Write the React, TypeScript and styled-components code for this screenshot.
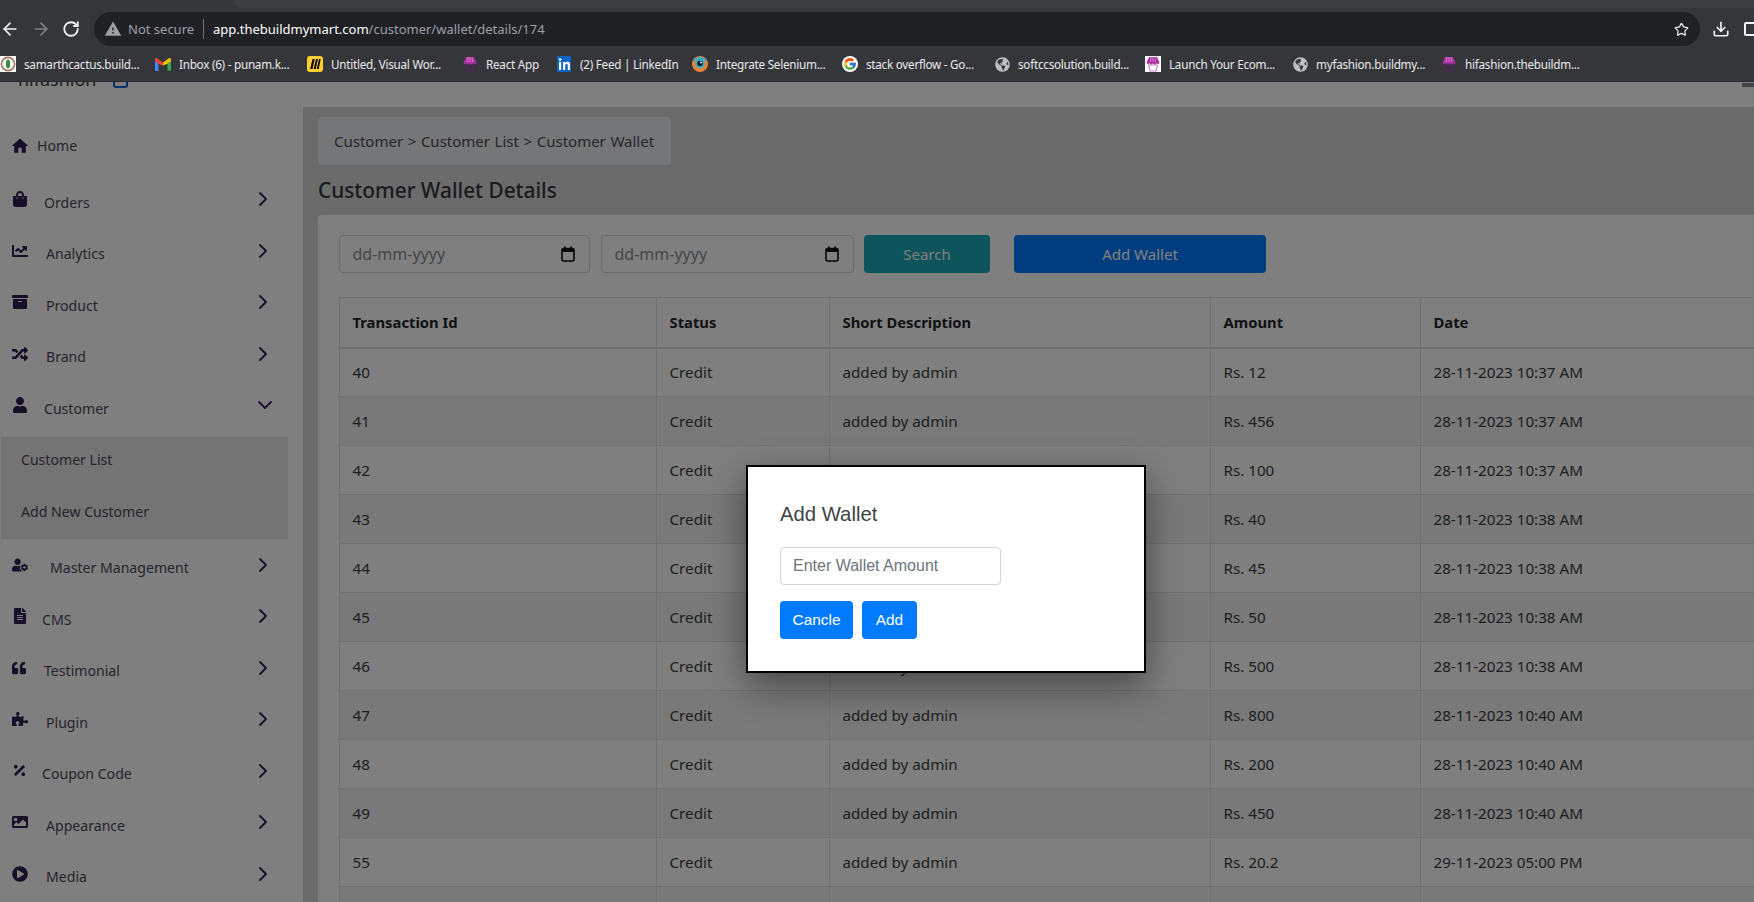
import React from "react";
import styled, { createGlobalStyle } from "styled-components";
import { ArrowLeft, ArrowRight, RotateCw, Star, ChevronRight, ChevronDown, Download } from "lucide-react";
import { MdWarning, MdHome } from "react-icons/md";
import { FcGoogle } from "react-icons/fc";
import {
  FaShoppingBag, FaChartLine, FaArchive, FaRandom, FaUser, FaUserCog, FaFileAlt,
  FaQuoteLeft, FaPuzzlePiece, FaPercentage, FaImage, FaPlayCircle, FaGlobeAmericas,
} from "react-icons/fa";

const Global = createGlobalStyle`
  html, body { margin: 0; padding: 0; background: #fff; overflow: hidden; }
  * { box-sizing: border-box; }
`;

const UI = `"Noto Sans", "Open Sans", sans-serif`;

const Shell = styled.div`
  width: 1754px; height: 902px; overflow: hidden;
  display: flex; flex-direction: column;
  font-family: ${UI};
`;

/* browser chrome */
const TabStrip = styled.div`
  height: 8px; background: #35363a; padding-left: 234px; flex: none;
`;
const TabBand = styled.div`
  height: 8px; background: #3d3f43; border-bottom-left-radius: 8px;
`;
const Toolbar = styled.div`
  height: 38px; flex: none; background: #35363a;
  display: flex; align-items: flex-start; padding-top: 4px;
`;
const NavIcons = styled.div`
  width: 94px; height: 34px; flex: none;
  display: flex; align-items: center; gap: 11px; color: #f1f3f4;
`;
const NavButton = styled.span<{ $muted?: boolean }>`
  display: inline-flex; color: ${(p) => (p.$muted ? "#7d8084" : "#f1f3f4")};
`;
const Omnibox = styled.div`
  width: 1606px; height: 34px; flex: none; border-radius: 17px; background: #202124;
  display: flex; align-items: center; padding: 0 11px 0 10px;
  font-size: 13px; white-space: nowrap;
`;
const InsecureText = styled.span`
  color: #9aa0a6; margin-left: 6px; width: 68px;
`;
const Divider = styled.span`
  width: 1px; height: 20px; background: #6f7378; margin: 0 9px 0 7px;
`;
const UrlHost = styled.span` color: #fff; `;
const UrlPath = styled.span` color: #9aa0a6; flex: 1; `;
const ToolRight = styled.div`
  flex: 1; height: 34px; display: flex; align-items: center; gap: 14px; padding-left: 12px; color: #f1f3f4;
`;
const CutBox = styled.span`
  width: 12px; height: 14px; border: 2px solid #f1f3f4; border-radius: 2px; flex: none;
`;
const Bookmarks = styled.div`
  height: 36px; flex: none; background: #35363a; border-bottom: 1px solid #2b2c2f;
  display: flex; align-items: center; padding-top: 1px;
`;
const Bookmark = styled.div<{ $w: number; $x: number }>`
  width: ${(p) => p.$w}px; margin-left: ${(p) => p.$x}px; flex: none;
  display: flex; align-items: center; gap: 8px;
`;
const BookmarkLabel = styled.span`
  color: #e8eaed; font-size: 11.7px; letter-spacing: -0.25px; white-space: nowrap; line-height: 16px;
`;
const Favicon = styled.span`
  width: 16px; height: 16px; flex: none; display: inline-flex; align-items: center; justify-content: center;
`;
const GoogleDisc = styled(Favicon)`
  background: #fff; border-radius: 50%;
`;
const GlobeIcon = styled(FaGlobeAmericas)`
  color: #bdc1c6;
`;

/* page under the dialog */
const PageArea = styled.div`
  flex: 1; position: relative; overflow: hidden; background: #d7d7d7;
  display: flex; flex-direction: column;
`;
const TopBar = styled.div`
  height: 25px; flex: none; background: #fff; overflow: hidden;
  display: flex; justify-content: space-between; padding: 0 0 0 18px;
`;
const Brand = styled.div`
  display: flex; align-items: center; height: 24px; margin-top: -15px; gap: 17px;
  font-size: 18px; color: #3a3a3a; line-height: 24px;
`;
const BrandMark = styled.span`
  width: 15px; height: 18px; border: 2px solid #0b5ed7; border-radius: 3px;
`;
const TopDash = styled.span`
  width: 12px; height: 4px; background: #8a8a8a; margin-top: 1px;
`;
const Body = styled.div`
  flex: 1; display: flex; min-height: 0;
`;
const Sidebar = styled.nav`
  width: 303px; flex: none; background: #fff; padding-top: 11px;
`;
const NavRow = styled.div<{ $h?: number }>`
  height: ${(p) => p.$h ?? 51.5}px; display: flex; align-items: center; padding-left: 12px;
  color: #2f1c4f;
`;
const NavIcon = styled.span<{ $nudge?: number }>`
  width: 20px; flex: none; display: inline-flex; align-items: center; margin-left: ${(p) => p.$nudge ?? 0}px;
  margin-right: ${(p) => -(p.$nudge ?? 0)}px;
`;
const NavLabel = styled.span<{ $x: number; $home?: boolean }>`
  margin-left: ${(p) => p.$x - 32}px; margin-top: ${(p) => (p.$home ? 0 : 6)}px;
  font-size: 14.1px; color: #4c4a58; white-space: nowrap;
`;
const NavChevron = styled.span<{ $open?: boolean }>`
  margin-left: auto; width: 24px; height: 24px; margin-right: ${(p) => (p.$open ? 26 : 28)}px;
  display: inline-flex; color: #2f1c4f;
`;
const SubMenu = styled.div`
  margin: 5.5px 15px 0 1px; height: 102.5px; background: #e8e8e8;
`;
const SubItem = styled.div`
  height: 51.5px; padding: 0 0 5px 20px; display: flex; align-items: center;
  font-size: 14.1px; color: #4c4a58;
`;

const Main = styled.main`
  flex: 1; padding: 10px 0 0 15px; min-width: 0; overflow: hidden;
`;
const Crumbs = styled.div`
  width: 353px; height: 48px; background: #e9ecef; border-radius: 4px;
  display: flex; align-items: center; padding-left: 16px;
  font-size: 15px; word-spacing: 0.7px; color: #4c4f54; white-space: nowrap;
`;
const PageTitle = styled.h1`
  margin: 0 0 1px; height: 49px; display: flex; align-items: center;
  font-size: 20.8px; font-weight: 500; color: #33363a; white-space: nowrap;
`;
const Card = styled.section`
  width: 1500px; background: #fff; border-radius: 4px; padding: 20px 21px;
`;
const Filters = styled.div`
  display: flex; align-items: stretch; height: 38px; margin-bottom: 24px;
`;
const DateField = styled.div<{ $w: number; $mr: number }>`
  width: ${(p) => p.$w}px; margin-right: ${(p) => p.$mr}px; flex: none;
  border: 1px solid #ced4da; border-radius: 4px;
  display: flex; align-items: center; justify-content: space-between; padding: 0 14px 1px 12.5px;
  font-size: 16px; color: #8a8f94;
`;
const ActionButton = styled.button<{ $w: number; $mr?: number; $bg: string }>`
  width: ${(p) => p.$w}px; margin-right: ${(p) => p.$mr ?? 0}px; flex: none;
  background: ${(p) => p.$bg}; color: #fff; border: 0; border-radius: 4px;
  font-family: ${UI}; font-size: 15px;
`;
const Table = styled.table`
  width: 100%; table-layout: fixed; border-collapse: collapse; color: #3a3d40; font-size: 15.2px;
`;
const Th = styled.th<{ $w?: number }>`
  width: ${(p) => (p.$w ? `${p.$w}px` : "auto")};
  height: 50px; padding: 0 12.5px; text-align: left; font-weight: 700; color: #212529; font-size: 14.8px;
  border: 1px solid #dee2e6; border-bottom-width: 2px;
`;
const Td = styled.td`
  height: 49px; padding: 0 12.5px; border: 1px solid #dee2e6;
`;
const Tr = styled.tr`
  &:nth-child(even) { background: rgba(0, 0, 0, 0.05); }
`;

/* dialog */
const Backdrop = styled.div`
  position: absolute; inset: 0; background: rgba(0, 0, 0, 0.5);
`;
const Dialog = styled.div`
  position: absolute; left: 746px; top: 383px; width: 400px; height: 208px;
  background: #fff; border: 2px solid #000; padding: 32px;
  box-shadow: 0 12px 34px rgba(0, 0, 0, 0.45);
  font-family: "Liberation Sans", Arial, sans-serif;
`;
const DialogTitle = styled.div`
  font-size: 20.3px; line-height: 30px; color: #3d4246; margin-bottom: 18px;
`;
const AmountInput = styled.input`
  display: block; width: 221px; height: 38px; padding: 0 12px;
  border: 1px solid #ced4da; border-radius: 4px; font: 16px "Liberation Sans", Arial, sans-serif;
  margin-bottom: 16px; outline: none;
  &::placeholder { color: #6c757d; opacity: 1; }
`;
const DialogActions = styled.div`
  display: flex; gap: 9px;
`;
const DialogButton = styled.button<{ $w: number }>`
  width: ${(p) => p.$w}px; height: 38px; background: #007bff; color: #fff; border: 0; border-radius: 4px;
  font: 15.4px "Liberation Sans", Arial, sans-serif; padding: 0;
`;

const Calendar = () => (
  <svg width="14" height="16" viewBox="0 0 14 16">
    <rect x="1" y="2.5" width="12" height="12.5" rx="1.5" fill="none" stroke="#111" strokeWidth="1.6" />
    <rect x="1" y="2.5" width="12" height="3.5" fill="#111" />
    <rect x="3" y="0.5" width="1.6" height="3" fill="#111" />
    <rect x="9.4" y="0.5" width="1.6" height="3" fill="#111" />
  </svg>
);

const Store = ({ bg }: { bg?: string }) => (
  <svg width="16" height="16" viewBox="0 0 16 16">
    {bg && <rect width="16" height="16" fill={bg} />}
    <path d="M4 1h8l2.500 5.500a1.600 1.600 0 0 1-3 .6 1.700 1.700 0 0 1-3.500 0 1.700 1.700 0 0 1-3.500 0 1.600 1.600 0 0 1-3-.6z" fill="#a8329f" />
    <path d="M3.500 9h9l-1.500 6H5z" fill="none" stroke={bg ? "#c98ac6" : "#5b2160"} strokeWidth="1.200" />
    <path d="M6 1 5.400 6M10 1l.6 5M8 1v5" stroke="#e59ae0" strokeWidth=".7" />
  </svg>
);
const Cactus = () => (
  <svg width="16" height="16" viewBox="0 0 16 16">
    <rect width="16" height="16" fill="#fff" />
    <circle cx="8" cy="8" r="6.600" fill="none" stroke="#a5765f" strokeWidth="1.600" />
    <ellipse cx="8" cy="8" rx="2" ry="4.400" fill="#2f8a3b" />
  </svg>
);
const Gmail = () => (
  <svg width="16" height="13" viewBox="0 0 16 13">
    <path d="M0 2v9.500A1.200 1.200 0 0 0 1.200 13H3.500V5.800z" fill="#4285f4" />
    <path d="M16 2v9.500a1.200 1.200 0 0 1-1.200 1.200h-2.300V5.800z" fill="#34a853" />
    <path d="M3.500 5.800 0 3V1.600C0 .4 1.400-.3 2.400.4L8 4.600v3z" fill="#ea4335" />
    <path d="M12.500 5.800 16 3V1.600c0-1.200-1.400-1.900-2.400-1.200L8 4.600v3z" fill="#fbbc04" />
  </svg>
);
const Miro = () => (
  <svg width="16" height="16" viewBox="0 0 16 16">
    <rect width="16" height="16" rx="3" fill="#ffd02f" />
    <path d="M3 13 5.500 3h2.300L5.500 13zM6.500 13 9 3h2L8.800 13zM9.700 13 12 3h1.700L11.800 13z" fill="#141414" />
  </svg>
);
const LinkedIn = () => (
  <svg width="14" height="16" viewBox="0 0 14 16">
    <rect width="14" height="16" fill="#0a66c2" />
    <rect x="2" y="6" width="2.200" height="8" fill="#fff" />
    <circle cx="3.100" cy="3.600" r="1.300" fill="#fff" />
    <path d="M6 6h2v1.200c.5-.9 1.400-1.400 2.400-1.400 1.900 0 2.600 1.200 2.600 3.200v5h-2.200V9.600c0-1-.3-1.700-1.200-1.700S8.200 8.600 8.200 9.600V14H6z" fill="#fff" />
  </svg>
);
const LensLogo = () => (
  <svg width="16" height="16" viewBox="0 0 16 16">
    <circle cx="8" cy="8" r="8" fill="#e8833a" />
    <path d="M1 5a8 8 0 0 1 14 0z" fill="#4aa5b5" />
    <circle cx="8" cy="7.500" r="4.800" fill="#3fb0c0" />
    <circle cx="8" cy="7.500" r="2.800" fill="#15202b" />
    <circle cx="9" cy="6.500" r=".9" fill="#fff" />
  </svg>
);

const bookmarks: { x: number; w: number; t: string; icon: React.ReactNode }[] = [
  { x: 0, w: 138, t: "samarthcactus.build...", icon: <Cactus /> },
  { x: 17, w: 136, t: "Inbox (6) - punam.k...", icon: <Gmail /> },
  { x: 16, w: 138, t: "Untitled, Visual Wor...", icon: <Miro /> },
  { x: 17, w: 77, t: "React App", icon: <Store /> },
  { x: 17, w: 119, t: "(2) Feed | LinkedIn", icon: <LinkedIn /> },
  { x: 17, w: 133, t: "Integrate Selenium...", icon: <LensLogo /> },
  { x: 17, w: 135, t: "stack overflow - Go...", icon: <GoogleDisc><FcGoogle size={14} /></GoogleDisc> },
  { x: 17, w: 135, t: "softccsolution.build...", icon: <GlobeIcon size={15} /> },
  { x: 16, w: 129, t: "Launch Your Ecom...", icon: <Store bg="#fff" /> },
  { x: 18, w: 132, t: "myfashion.buildmy...", icon: <GlobeIcon size={15} /> },
  { x: 17, w: 137, t: "hifashion.thebuildm...", icon: <Store /> },
];

const Nav = ({ icon, label, x, open }: { icon: React.ReactNode; label: string; x: number; open?: boolean }) => (
  <NavRow>
    <NavIcon>{icon}</NavIcon>
    <NavLabel $x={x}>{label}</NavLabel>
    <NavChevron $open={open}>{open ? <ChevronDown size={24} strokeWidth={1.8} /> : <ChevronRight size={24} strokeWidth={1.8} />}</NavChevron>
  </NavRow>
);

const rows: [string, string, string][] = [
  ["40", "Rs. 12", "28-11-2023 10:37 AM"],
  ["41", "Rs. 456", "28-11-2023 10:37 AM"],
  ["42", "Rs. 100", "28-11-2023 10:37 AM"],
  ["43", "Rs. 40", "28-11-2023 10:38 AM"],
  ["44", "Rs. 45", "28-11-2023 10:38 AM"],
  ["45", "Rs. 50", "28-11-2023 10:38 AM"],
  ["46", "Rs. 500", "28-11-2023 10:38 AM"],
  ["47", "Rs. 800", "28-11-2023 10:40 AM"],
  ["48", "Rs. 200", "28-11-2023 10:40 AM"],
  ["49", "Rs. 450", "28-11-2023 10:40 AM"],
  ["55", "Rs. 20.2", "29-11-2023 05:00 PM"],
];

export default function App() {
  return (
    <Shell>
      <Global />
      <TabStrip><TabBand /></TabStrip>
      <Toolbar>
        <NavIcons>
          <NavButton><ArrowLeft size={20} /></NavButton>
          <NavButton $muted><ArrowRight size={20} /></NavButton>
          <NavButton><RotateCw size={18} strokeWidth={2.4} /></NavButton>
        </NavIcons>
        <Omnibox>
          <MdWarning size={18} color="#9aa0a6" />
          <InsecureText>Not secure</InsecureText>
          <Divider />
          <UrlHost>app.thebuildmymart.com</UrlHost>
          <UrlPath>/customer/wallet/details/174</UrlPath>
          <Star size={15} color="#e8eaed" />
        </Omnibox>
        <ToolRight>
          <Download size={18} strokeWidth={2.2} />
          <CutBox />
        </ToolRight>
      </Toolbar>
      <Bookmarks>
        {bookmarks.map((b) => (
          <Bookmark key={b.t} $x={b.x} $w={b.w}>
            <Favicon>{b.icon}</Favicon>
            <BookmarkLabel>{b.t}</BookmarkLabel>
          </Bookmark>
        ))}
      </Bookmarks>
      <PageArea>
        <TopBar>
          <Brand>hifashion<BrandMark /></Brand>
          <TopDash />
        </TopBar>
        <Body>
          <Sidebar>
            <NavRow $h={55.5}>
              <NavIcon $nudge={-2}><MdHome size={20} /></NavIcon>
              <NavLabel $x={37} $home>Home</NavLabel>
            </NavRow>
            <Nav icon={<FaShoppingBag size={16} />} label="Orders" x={44} />
            <Nav icon={<FaChartLine size={16} />} label="Analytics" x={46} />
            <Nav icon={<FaArchive size={16} />} label="Product" x={46} />
            <Nav icon={<FaRandom size={16} />} label="Brand" x={46} />
            <Nav icon={<FaUser size={16} />} label="Customer" x={44} open />
            <SubMenu>
              <SubItem>Customer List</SubItem>
              <SubItem>Add New Customer</SubItem>
            </SubMenu>
            <Nav icon={<FaUserCog size={16} />} label="Master Management" x={50} />
            <Nav icon={<FaFileAlt size={16} />} label="CMS" x={42} />
            <Nav icon={<FaQuoteLeft size={14} />} label="Testimonial" x={44} />
            <Nav icon={<FaPuzzlePiece size={16} />} label="Plugin" x={46} />
            <Nav icon={<FaPercentage size={15} />} label="Coupon Code" x={42} />
            <Nav icon={<FaImage size={16} />} label="Appearance" x={46} />
            <Nav icon={<FaPlayCircle size={16} />} label="Media" x={46} />
          </Sidebar>
          <Main>
            <Crumbs>Customer &gt; Customer List &gt; Customer Wallet</Crumbs>
            <PageTitle>Customer Wallet Details</PageTitle>
            <Card>
              <Filters>
                <DateField $w={251} $mr={11}>dd-mm-yyyy<Calendar /></DateField>
                <DateField $w={253} $mr={10}>dd-mm-yyyy<Calendar /></DateField>
                <ActionButton $w={126} $mr={24} $bg="#1aa8b8">Search</ActionButton>
                <ActionButton $w={252} $bg="#047dff">Add Wallet</ActionButton>
              </Filters>
              <Table>
                <thead>
                  <tr>
                    <Th $w={317}>Transaction Id</Th>
                    <Th $w={173}>Status</Th>
                    <Th $w={381}>Short Description</Th>
                    <Th $w={210}>Amount</Th>
                    <Th>Date</Th>
                  </tr>
                </thead>
                <tbody>
                  {rows.map((r) => (
                    <Tr key={r[0]}>
                      <Td>{r[0]}</Td>
                      <Td>Credit</Td>
                      <Td>added by admin</Td>
                      <Td>{r[1]}</Td>
                      <Td>{r[2]}</Td>
                    </Tr>
                  ))}
                  <Tr>
                    <Td /><Td /><Td /><Td /><Td />
                  </Tr>
                </tbody>
              </Table>
            </Card>
          </Main>
        </Body>
        <Backdrop />
        <Dialog>
          <DialogTitle>Add Wallet</DialogTitle>
          <AmountInput placeholder="Enter Wallet Amount" />
          <DialogActions>
            <DialogButton $w={73}>Cancle</DialogButton>
            <DialogButton $w={55}>Add</DialogButton>
          </DialogActions>
        </Dialog>
      </PageArea>
    </Shell>
  );
}
